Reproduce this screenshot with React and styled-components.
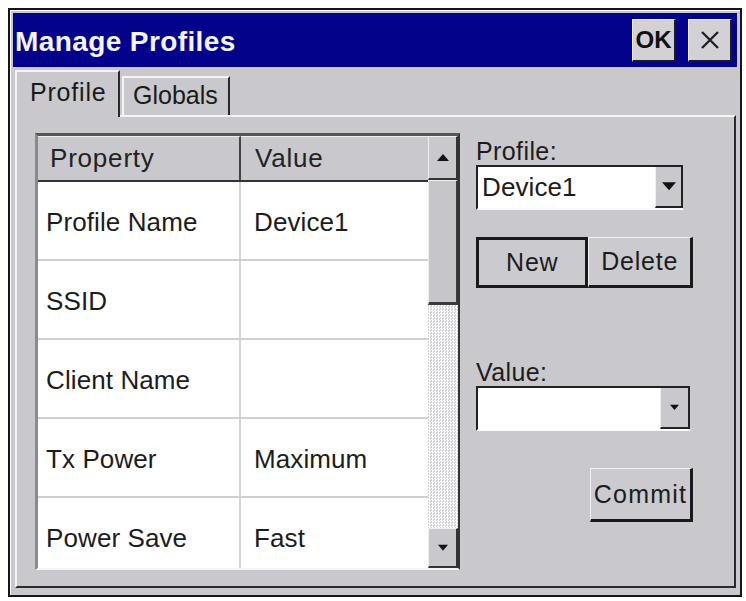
import React from "react";
import styled, { createGlobalStyle } from "styled-components";

const GlobalStyle = createGlobalStyle`
  html, body {
    margin: 0;
    padding: 0;
    background: #ffffff;
  }
  body {
    font-family: "Liberation Sans", Arial, sans-serif;
  }
`;

const rows = [
  { property: "Profile Name", value: "Device1" },
  { property: "SSID", value: "" },
  { property: "Client Name", value: "" },
  { property: "Tx Power", value: "Maximum" },
  { property: "Power Save", value: "Fast" },
];

function Arrow({ dir = "down", size = 12 }) {
  const d = dir === "up" ? "M0 8 L6 1 L12 8 Z" : "M0 1 L12 1 L6 8 Z";
  return (
    <svg width={size} height={(size * 9) / 12} viewBox="0 0 12 9">
      <path d={d} fill="#111" />
    </svg>
  );
}

function App() {
  return (
    <Page>
      <GlobalStyle />
      <Window>
        <TitleBar>
          <Title>Manage Profiles</Title>
          <TitleButtons>
            <CaptionButton>OK</CaptionButton>
            <CaptionButton>
              <svg width="22" height="22" viewBox="0 0 22 22">
                <path d="M3 3 L19 19 M19 3 L3 19" stroke="#222" strokeWidth="2.4" />
              </svg>
            </CaptionButton>
          </TitleButtons>
        </TitleBar>
        <Body>
          <TabStrip>
            <Tab active>Profile</Tab>
            <Tab>Globals</Tab>
          </TabStrip>
          <Panel>
            <ListView>
              <Grid>
                <HeaderRow>
                  <HeaderCell wide>Property</HeaderCell>
                  <HeaderCell>Value</HeaderCell>
                </HeaderRow>
                {rows.map((r) => (
                  <Row key={r.property}>
                    <Cell wide>{r.property}</Cell>
                    <Cell>{r.value}</Cell>
                  </Row>
                ))}
              </Grid>
              <ScrollBar>
                <ScrollButton tall>
                  <Arrow dir="up" size={12} />
                </ScrollButton>
                <Thumb />
                <Track />
                <ScrollButton>
                  <Arrow size={10} />
                </ScrollButton>
              </ScrollBar>
            </ListView>
            <Side>
              <Label>Profile:</Label>
              <Combo width={207}>
                <ComboText>Device1</ComboText>
                <ComboButton width={28}>
                  <Arrow size={14} />
                </ComboButton>
              </Combo>
              <ButtonRow>
                <PushButton isDefault width={113}>New</PushButton>
                <PushButton width={105}>Delete</PushButton>
              </ButtonRow>
              <Label spaced>Value:</Label>
              <Combo width={214}>
                <ComboText />
                <ComboButton width={30}>
                  <Arrow size={9} />
                </ComboButton>
              </Combo>
              <CommitButton>Commit</CommitButton>
            </Side>
          </Panel>
        </Body>
      </Window>
    </Page>
  );
}

export default App;

const Page = styled.div`
  padding: 8px 4px 4px 8px;
`;

const Window = styled.div`
  width: 734px;
  height: 589px;
  box-sizing: border-box;
  border: 2px solid #151515;
  padding: 3px;
  background: #c9c8cd;
  box-shadow: inset 1px 1px 0 #ffffff;
  display: flex;
  flex-direction: column;
`;

const TitleBar = styled.div`
  height: 54px;
  background: #02028a;
  display: flex;
  align-items: center;
  justify-content: space-between;
  flex-shrink: 0;
`;

const Title = styled.div`
  color: #f4f4ff;
  font-weight: 700;
  font-size: 28px;
  padding: 3px 0 0 2px;
  letter-spacing: 0.4px;
`;

const TitleButtons = styled.div`
  display: flex;
  gap: 12px;
  margin-right: 5px;
`;

const CaptionButton = styled.div`
  width: 44px;
  height: 43px;
  box-sizing: border-box;
  background: #d2d1d6;
  border-top: 1px solid #f0f0f0;
  border-left: 1px solid #f0f0f0;
  border-right: 2px solid #1c1c1c;
  border-bottom: 2px solid #1c1c1c;
  display: flex;
  align-items: center;
  justify-content: center;
  font-weight: 700;
  font-size: 24px;
  color: #111;
`;

const Body = styled.div`
  flex: 1;
  display: flex;
  flex-direction: column;
  padding: 0 1px 4px 2px;
`;

const TabStrip = styled.div`
  height: 48px;
  display: flex;
  align-items: flex-end;
  position: relative;
  z-index: 1;
`;

const Tab = styled.div`
  box-sizing: border-box;
  height: ${(p) => (p.active ? "47px" : "39px")};
  width: ${(p) => (p.active ? "105px" : "108px")};
  margin-bottom: ${(p) => (p.active ? "-2px" : "0")};
  background: #c9c8cd;
  border-top: 2px solid #f4f4f4;
  border-left: 2px solid #f4f4f4;
  border-right: 2px solid #2a2a2a;
  font-size: 25px;
  letter-spacing: ${(p) => (p.active ? "0.8px" : "0")};
  color: #1a1a1a;
  padding: ${(p) => (p.active ? "6px 0 0 13px" : "3px 0 0 9px")};
  margin-left: ${(p) => (p.active ? "0" : "2px")};
`;

const Panel = styled.div`
  flex: 1;
  box-sizing: border-box;
  border-top: 2px solid #f4f4f4;
  border-left: 2px solid #f4f4f4;
  border-right: 2px solid #2a2a2a;
  border-bottom: 2px solid #2a2a2a;
  padding: 16px 0 0 18px;
  display: flex;
  gap: 16px;
  align-items: flex-start;
`;

const ListView = styled.div`
  width: 425px;
  height: 437px;
  box-sizing: border-box;
  border-top: 3px solid #555;
  border-left: 3px solid #8a8a8e;
  border-bottom: 2px solid #f6f6f6;
  border-right: 2px solid #333;
  display: flex;
  overflow: hidden;
  background: #fff;
`;

const Grid = styled.div`
  flex: 1;
  display: flex;
  flex-direction: column;
  overflow: hidden;
`;

const HeaderRow = styled.div`
  height: 46px;
  flex-shrink: 0;
  box-sizing: border-box;
  display: flex;
  background: #c9c8cd;
  border-bottom: 2px solid #333;
`;

const HeaderCell = styled.div`
  width: ${(p) => (p.wide ? "203px" : "auto")};
  flex: ${(p) => (p.wide ? "none" : "1")};
  box-sizing: border-box;
  display: flex;
  align-items: center;
  padding-left: ${(p) => (p.wide ? "12px" : "14px")};
  font-size: 26px;
  letter-spacing: 0.8px;
  color: #222;
  border-right: ${(p) => (p.wide ? "2px solid #444" : "none")};
  border-top: 1px solid #efefef;
`;

const Row = styled.div`
  height: 79px;
  flex-shrink: 0;
  box-sizing: border-box;
  display: flex;
  border-bottom: 2px solid #cfcfd2;
`;

const Cell = styled.div`
  width: ${(p) => (p.wide ? "203px" : "auto")};
  flex: ${(p) => (p.wide ? "none" : "1")};
  box-sizing: border-box;
  display: flex;
  align-items: center;
  padding: 4px 0 0 ${(p) => (p.wide ? "8px" : "13px")};
  font-size: 26px;
  color: #1c1c1c;
  letter-spacing: 0.1px;
  border-right: ${(p) => (p.wide ? "2px solid #d4d4d6" : "none")};
`;

const ScrollBar = styled.div`
  width: 30px;
  display: flex;
  flex-direction: column;
  flex-shrink: 0;
`;

const ScrollButton = styled.div`
  height: ${(p) => (p.tall ? "44px" : "40px")};
  box-sizing: border-box;
  background: #c9c8cd;
  border-top: 1px solid #f0f0f0;
  border-left: 1px solid #f0f0f0;
  border-right: 2px solid #333;
  border-bottom: 2px solid #333;
  display: flex;
  align-items: center;
  justify-content: center;
  flex-shrink: 0;
`;

const Thumb = styled.div`
  height: 125px;
  box-sizing: border-box;
  background: #c6c5ca;
  border-top: 1px solid #eeeeee;
  border-left: 1px solid #eeeeee;
  border-right: 2px solid #3a3a3a;
  border-bottom: 3px solid #3a3a3a;
  flex-shrink: 0;
`;

const Track = styled.div`
  flex: 1;
  background-color: #ececec;
  background-image: repeating-conic-gradient(#ffffff 0 25%, #cfcfd3 0 50%);
  background-size: 3px 3px;
`;

const Side = styled.div`
  width: 217px;
  display: flex;
  flex-direction: column;
  padding-top: 4px;
`;

const Label = styled.div`
  font-size: 25px;
  letter-spacing: 0.4px;
  color: #1c1c1c;
  height: 28px;
  line-height: 28px;
  margin-top: ${(p) => (p.spaced ? "70px" : "0")};
`;

const Combo = styled.div`
  width: ${(p) => p.width}px;
  height: 45px;
  box-sizing: border-box;
  background: #fff;
  border-top: 2px solid #222;
  border-left: 2px solid #222;
  border-bottom: 2px solid #fafafa;
  display: flex;
`;

const ComboText = styled.div`
  flex: 1;
  font-size: 26px;
  color: #1c1c1c;
  display: flex;
  align-items: center;
  padding-left: 4px;
  letter-spacing: 0.1px;
`;

const ComboButton = styled.div`
  width: ${(p) => p.width}px;
  box-sizing: border-box;
  background: #c9c8cd;
  border-left: 1px solid #eee;
  border-right: 2px solid #222;
  border-bottom: 2px solid #222;
  display: flex;
  align-items: center;
  justify-content: center;
`;

const ButtonRow = styled.div`
  display: flex;
  margin-top: 27px;
`;

const PushButton = styled.div`
  width: ${(p) => p.width}px;
  height: 51px;
  box-sizing: border-box;
  background: #cbcacf;
  border-top: ${(p) => (p.isDefault ? "3px solid #1a1a1a" : "1px solid #f2f2f2")};
  border-left: ${(p) => (p.isDefault ? "3px solid #1a1a1a" : "1px solid #f2f2f2")};
  border-right: 3px solid #1a1a1a;
  border-bottom: 3px solid #1a1a1a;
  display: flex;
  align-items: center;
  justify-content: center;
  font-size: 25px;
  letter-spacing: 0.8px;
  color: #1c1c1c;
`;

const CommitButton = styled(PushButton)`
  width: 103px;
  height: 54px;
  margin-top: 37px;
  align-self: flex-end;
  letter-spacing: 1.2px;
`;
